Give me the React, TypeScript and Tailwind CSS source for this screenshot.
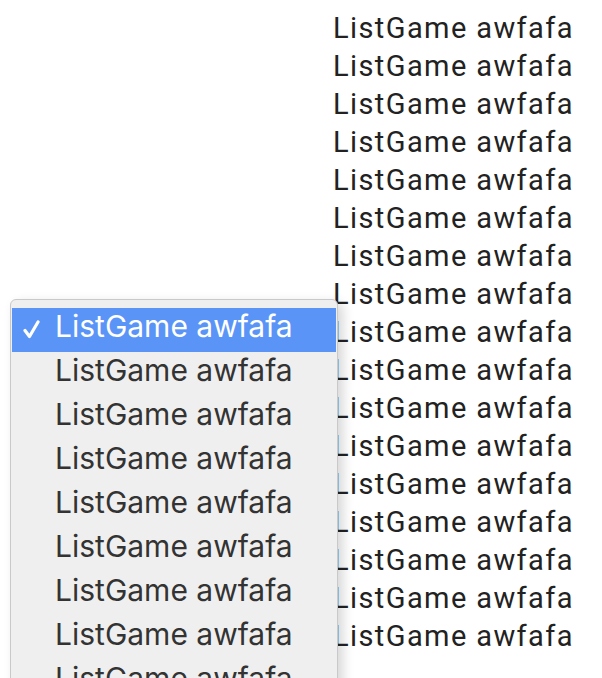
import React from "react";

const items = Array.from({ length: 17 });
const menuItems = Array.from({ length: 9 });

export default function App() {
  return (
    <div className="relative w-[602px] h-[678px] overflow-hidden bg-white">
      <div
        className="flex flex-col pl-[333px] pt-[9px] text-[29px] leading-[38px] tracking-[1.4px] text-[#222222]"
        style={{ fontFamily: "Roboto, sans-serif" }}
      >
        {items.map((_, i) => (
          <div key={i} className="whitespace-nowrap">ListGame awfafa</div>
        ))}
      </div>
      <div
        className="absolute left-[10px] top-[299px] w-[328px] h-[420px] rounded-[6px] border border-[#c9c9c9] bg-[#efefef] px-[1px] pt-[8px] shadow-[5px_4px_12px_rgba(0,0,0,0.16)]"
        style={{ fontFamily: "Inter, 'Noto Sans', sans-serif" }}
      >
        {menuItems.map((_, i) => (
          <div
            key={i}
            className={
              i === 0
                ? "relative flex h-[44px] items-center bg-[#5a94f7] pb-[7px] pl-[43px] text-[30px] text-white"
                : "relative flex h-[44px] items-center pb-[7px] pl-[43px] text-[30px] text-[#333333]"
            }
          >
            {i === 0 && (
              <svg
                className="absolute left-[11px] top-[12px]"
                width="17"
                height="19"
                viewBox="0 0 17 19"
                fill="none"
              >
                <path
                  d="M2 10.5 L6.5 16.5 L15 2"
                  stroke="white"
                  strokeWidth="3.2"
                  strokeLinecap="round"
                  strokeLinejoin="round"
                />
              </svg>
            )}
            <span className="whitespace-nowrap">ListGame awfafa</span>
          </div>
        ))}
      </div>
    </div>
  );
}
